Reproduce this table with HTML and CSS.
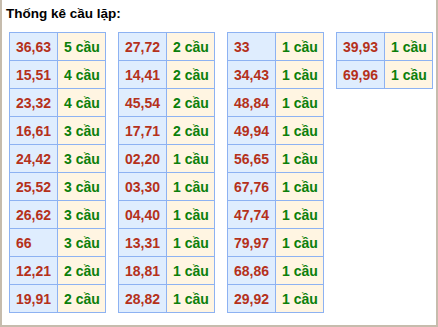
FILE: index.html
```html
<!DOCTYPE html>
<html>
<head>
<meta charset="utf-8">
<link rel="stylesheet" href="styles.css">
</head>
<body>
<div class="box">
  <div class="title">Thống kê cầu lặp:</div>
  <div class="tables">
    <table class="stat">
      <tr><td class="num">36,63</td><td class="cnt">5 cầu</td></tr>
      <tr><td class="num">15,51</td><td class="cnt">4 cầu</td></tr>
      <tr><td class="num">23,32</td><td class="cnt">4 cầu</td></tr>
      <tr><td class="num">16,61</td><td class="cnt">3 cầu</td></tr>
      <tr><td class="num">24,42</td><td class="cnt">3 cầu</td></tr>
      <tr><td class="num">25,52</td><td class="cnt">3 cầu</td></tr>
      <tr><td class="num">26,62</td><td class="cnt">3 cầu</td></tr>
      <tr><td class="num">66</td><td class="cnt">3 cầu</td></tr>
      <tr><td class="num">12,21</td><td class="cnt">2 cầu</td></tr>
      <tr><td class="num">19,91</td><td class="cnt">2 cầu</td></tr>
    </table>
    <table class="stat">
      <tr><td class="num">27,72</td><td class="cnt">2 cầu</td></tr>
      <tr><td class="num">14,41</td><td class="cnt">2 cầu</td></tr>
      <tr><td class="num">45,54</td><td class="cnt">2 cầu</td></tr>
      <tr><td class="num">17,71</td><td class="cnt">2 cầu</td></tr>
      <tr><td class="num">02,20</td><td class="cnt">1 cầu</td></tr>
      <tr><td class="num">03,30</td><td class="cnt">1 cầu</td></tr>
      <tr><td class="num">04,40</td><td class="cnt">1 cầu</td></tr>
      <tr><td class="num">13,31</td><td class="cnt">1 cầu</td></tr>
      <tr><td class="num">18,81</td><td class="cnt">1 cầu</td></tr>
      <tr><td class="num">28,82</td><td class="cnt">1 cầu</td></tr>
    </table>
    <table class="stat">
      <tr><td class="num">33</td><td class="cnt">1 cầu</td></tr>
      <tr><td class="num">34,43</td><td class="cnt">1 cầu</td></tr>
      <tr><td class="num">48,84</td><td class="cnt">1 cầu</td></tr>
      <tr><td class="num">49,94</td><td class="cnt">1 cầu</td></tr>
      <tr><td class="num">56,65</td><td class="cnt">1 cầu</td></tr>
      <tr><td class="num">67,76</td><td class="cnt">1 cầu</td></tr>
      <tr><td class="num">47,74</td><td class="cnt">1 cầu</td></tr>
      <tr><td class="num">79,97</td><td class="cnt">1 cầu</td></tr>
      <tr><td class="num">68,86</td><td class="cnt">1 cầu</td></tr>
      <tr><td class="num">29,92</td><td class="cnt">1 cầu</td></tr>
    </table>
    <table class="stat">
      <tr><td class="num">39,93</td><td class="cnt">1 cầu</td></tr>
      <tr><td class="num">69,96</td><td class="cnt">1 cầu</td></tr>
    </table>
  </div>
</div>
</body>
</html>
```
FILE: styles.css
```css
html, body {
  margin: 0;
  padding: 0;
  background: #ffffff;
}
.box {
  box-sizing: border-box;
  width: 438px;
  height: 327px;
  border: 2px solid #c6bcad;
  border-top: none;
  padding: 6px 0 0 4px;
  font-family: "Liberation Sans", Arial, sans-serif;
  font-weight: bold;
  font-size: 13.5px;
}
.title {
  line-height: 16px;
  height: 16px;
  color: #000000;
}
.tables {
  display: flex;
  align-items: flex-start;
  gap: 12px;
  margin: 10px 0 0 3px;
}
.stat {
  border-collapse: separate;
  border-spacing: 0;
  border-top: 1px solid #8db2f2;
  border-left: 1px solid #8db2f2;
  table-layout: fixed;
  width: 97px;
  font-size: 14px;
}
.stat td {
  box-sizing: border-box;
  width: 48px;
  height: 28px;
  border-right: 1px solid #8db2f2;
  border-bottom: 1px solid #8db2f2;
  padding: 0 0 0 6px;
  line-height: 16px;
  text-align: left;
  vertical-align: middle;
  white-space: nowrap;
  overflow: hidden;
}
.stat .num {
  background: #dfedfe;
  color: #b5311b;
}
.stat .cnt {
  background: #fff5e2;
  color: #0b7f0b;
}
```
